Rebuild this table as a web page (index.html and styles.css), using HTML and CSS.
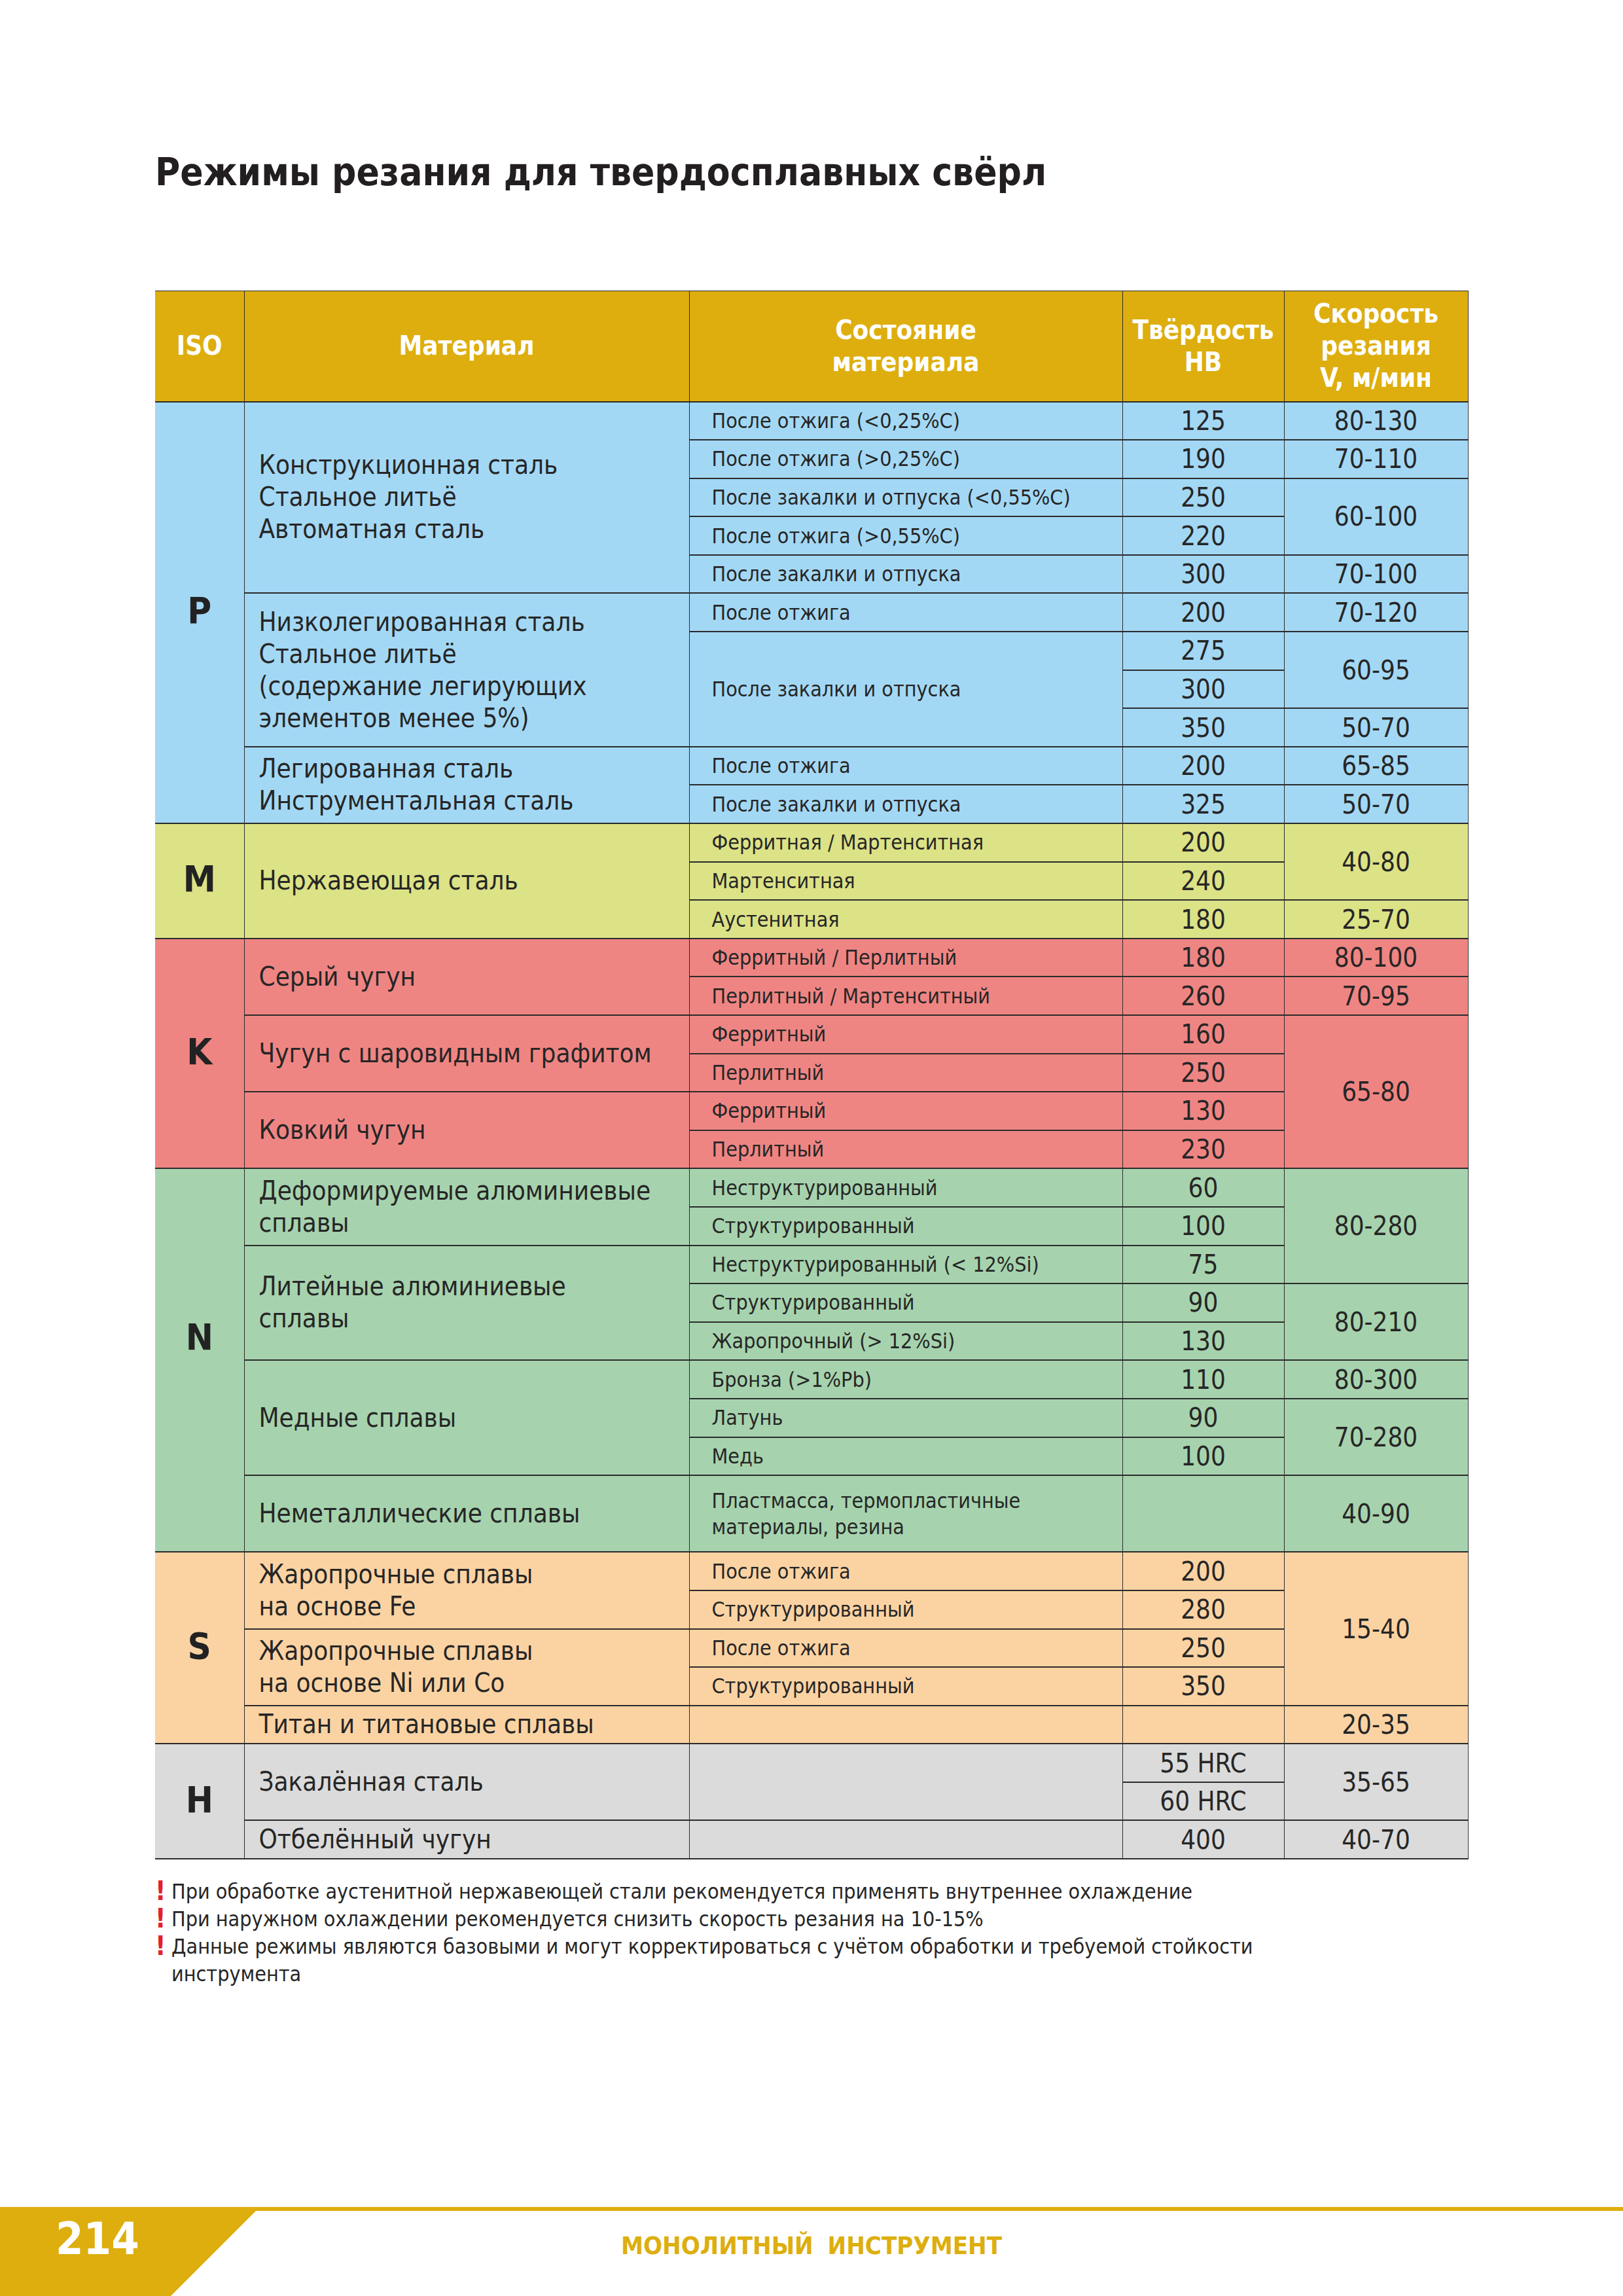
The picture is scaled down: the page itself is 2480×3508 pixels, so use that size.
FILE: index.html
```html
<!DOCTYPE html>
<html lang="ru">
<head>
<meta charset="utf-8">
<title>Режимы резания для твердосплавных свёрл</title>
<link rel="stylesheet" href="styles.css">
</head>
<body>
<div class="page">
  <main class="content">
    <h1 class="title">Режимы резания для твердосплавных свёрл</h1>
    <table class="modes">
      <colgroup>
        <col class="c-iso"><col class="c-mat"><col class="c-st"><col class="c-hb"><col class="c-v">
      </colgroup>
      <thead>
        <tr class="head">
          <th>ISO</th>
          <th>Материал</th>
          <th>Состояние<br>материала</th>
          <th>Твёрдость<br>HB</th>
          <th>Скорость<br>резания<br>V, м/мин</th>
        </tr>
      </thead>
      <tbody class="g-p">
        <tr>
          <td class="iso" rowspan="11">P</td>
          <td class="mat" rowspan="5">Конструкционная сталь<br>Стальное литьё<br>Автоматная сталь</td>
          <td class="st">После отжига (&lt;0,25%C)</td>
          <td class="num">125</td>
          <td class="num">80-130</td>
        </tr>
        <tr><td class="st">После отжига (&gt;0,25%C)</td><td class="num">190</td><td class="num">70-110</td></tr>
        <tr><td class="st">После закалки и отпуска (&lt;0,55%C)</td><td class="num">250</td><td class="num" rowspan="2">60-100</td></tr>
        <tr><td class="st">После отжига (&gt;0,55%C)</td><td class="num">220</td></tr>
        <tr><td class="st">После закалки и отпуска</td><td class="num">300</td><td class="num">70-100</td></tr>
        <tr>
          <td class="mat" rowspan="4">Низколегированная сталь<br>Стальное литьё<br>(содержание легирующих<br>элементов менее 5%)</td>
          <td class="st">После отжига</td><td class="num">200</td><td class="num">70-120</td>
        </tr>
        <tr><td class="st" rowspan="3">После закалки и отпуска</td><td class="num">275</td><td class="num" rowspan="2">60-95</td></tr>
        <tr><td class="num">300</td></tr>
        <tr><td class="num">350</td><td class="num">50-70</td></tr>
        <tr>
          <td class="mat" rowspan="2">Легированная сталь<br>Инструментальная сталь</td>
          <td class="st">После отжига</td><td class="num">200</td><td class="num">65-85</td>
        </tr>
        <tr><td class="st">После закалки и отпуска</td><td class="num">325</td><td class="num">50-70</td></tr>
      </tbody>
      <tbody class="g-m">
        <tr>
          <td class="iso" rowspan="3">M</td>
          <td class="mat" rowspan="3">Нержавеющая сталь</td>
          <td class="st">Ферритная / Мартенситная</td><td class="num">200</td><td class="num" rowspan="2">40-80</td>
        </tr>
        <tr><td class="st">Мартенситная</td><td class="num">240</td></tr>
        <tr><td class="st">Аустенитная</td><td class="num">180</td><td class="num">25-70</td></tr>
      </tbody>
      <tbody class="g-k">
        <tr>
          <td class="iso" rowspan="6">K</td>
          <td class="mat" rowspan="2">Серый чугун</td>
          <td class="st">Ферритный / Перлитный</td><td class="num">180</td><td class="num">80-100</td>
        </tr>
        <tr><td class="st">Перлитный / Мартенситный</td><td class="num">260</td><td class="num">70-95</td></tr>
        <tr>
          <td class="mat" rowspan="2">Чугун с шаровидным графитом</td>
          <td class="st">Ферритный</td><td class="num">160</td><td class="num" rowspan="4">65-80</td>
        </tr>
        <tr><td class="st">Перлитный</td><td class="num">250</td></tr>
        <tr>
          <td class="mat" rowspan="2">Ковкий чугун</td>
          <td class="st">Ферритный</td><td class="num">130</td>
        </tr>
        <tr><td class="st">Перлитный</td><td class="num">230</td></tr>
      </tbody>
      <tbody class="g-n">
        <tr>
          <td class="iso iso-high" rowspan="10">N</td>
          <td class="mat" rowspan="2">Деформируемые алюминиевые<br>сплавы</td>
          <td class="st">Неструктурированный</td><td class="num">60</td><td class="num" rowspan="3">80-280</td>
        </tr>
        <tr><td class="st">Структурированный</td><td class="num">100</td></tr>
        <tr>
          <td class="mat" rowspan="3">Литейные алюминиевые<br>сплавы</td>
          <td class="st">Неструктурированный (&lt; 12%Si)</td><td class="num">75</td>
        </tr>
        <tr><td class="st">Структурированный</td><td class="num">90</td><td class="num" rowspan="2">80-210</td></tr>
        <tr><td class="st">Жаропрочный (&gt; 12%Si)</td><td class="num">130</td></tr>
        <tr>
          <td class="mat" rowspan="3">Медные сплавы</td>
          <td class="st">Бронза (&gt;1%Pb)</td><td class="num">110</td><td class="num">80-300</td>
        </tr>
        <tr><td class="st">Латунь</td><td class="num">90</td><td class="num" rowspan="2">70-280</td></tr>
        <tr><td class="st">Медь</td><td class="num">100</td></tr>
        <tr>
          <td class="mat" rowspan="2">Неметаллические сплавы</td>
          <td class="st" rowspan="2">Пластмасса, термопластичные<br>материалы, резина</td>
          <td class="num" rowspan="2"></td>
          <td class="num" rowspan="2">40-90</td>
        </tr>
        <tr></tr>
      </tbody>
      <tbody class="g-s">
        <tr>
          <td class="iso" rowspan="5">S</td>
          <td class="mat" rowspan="2">Жаропрочные сплавы<br>на основе Fe</td>
          <td class="st">После отжига</td><td class="num">200</td><td class="num" rowspan="4">15-40</td>
        </tr>
        <tr><td class="st">Структурированный</td><td class="num">280</td></tr>
        <tr>
          <td class="mat" rowspan="2">Жаропрочные сплавы<br>на основе Ni или Co</td>
          <td class="st">После отжига</td><td class="num">250</td>
        </tr>
        <tr><td class="st">Структурированный</td><td class="num">350</td></tr>
        <tr><td class="mat">Титан и титановые сплавы</td><td class="st"></td><td class="num"></td><td class="num">20-35</td></tr>
      </tbody>
      <tbody class="g-h">
        <tr>
          <td class="iso" rowspan="3">H</td>
          <td class="mat" rowspan="2">Закалённая сталь</td>
          <td class="st" rowspan="2"></td>
          <td class="num">55 HRC</td><td class="num" rowspan="2">35-65</td>
        </tr>
        <tr><td class="num">60 HRC</td></tr>
        <tr><td class="mat">Отбелённый чугун</td><td class="st"></td><td class="num">400</td><td class="num">40-70</td></tr>
      </tbody>
    </table>

    <ul class="notes">
      <li><span class="mark">!</span>При обработке аустенитной нержавеющей стали рекомендуется применять внутреннее охлаждение</li>
      <li><span class="mark">!</span>При наружном охлаждении рекомендуется снизить скорость резания на 10-15%</li>
      <li><span class="mark">!</span>Данные режимы являются базовыми и могут корректироваться с учётом обработки и требуемой стойкости<br>инструмента</li>
    </ul>
  </main>

  <footer class="footer">
    <div class="page-num">214</div>
    <div class="section">МОНОЛИТНЫЙ ИНСТРУМЕНТ</div>
    <div class="spacer"></div>
  </footer>
</div>
</body>
</html>
```

FILE: styles.css
```css
html, body {
  margin: 0;
  padding: 0;
  background: #ffffff;
}

.page {
  width: 2480px;
  height: 3508px;
  display: flex;
  flex-direction: column;
  font-family: "DejaVu Sans Condensed", "DejaVu Sans", sans-serif;
  font-stretch: condensed;
  color: #262626;
  overflow: hidden;
}

.content {
  padding-left: 237px;
}

.title {
  margin: 0;
  padding-top: 228px;
  font-size: 58px;
  line-height: 70px;
  font-weight: bold;
  color: #231f20;
}

/* ---------- table ---------- */
.modes {
  margin-top: 146px;
  width: 2006px;
  border-collapse: collapse;
  table-layout: fixed;
}

.c-iso { width: 136px; }
.c-mat { width: 680px; }
.c-st  { width: 662px; }
.c-hb  { width: 247px; }
.c-v   { width: 281px; }

.modes th,
.modes td {
  padding: 0;
  border-bottom: 2px solid #2b2b2b;
  border-left: 1px solid #2b2b2b;
  vertical-align: middle;
}

.modes th:last-child,
.modes td:last-child {
  border-right: 1px solid #3a3a3a;
}

.modes .iso {
  border-left: 0;
}

.head {
  height: 169px;
}

.head th {
  background: #ddae0e;
  color: #ffffff;
  font-size: 40px;
  line-height: 49px;
  font-weight: bold;
  text-align: center;
  border-top: 1px solid #2b2b2b;
}

.head th:first-child {
  border-left: 0;
}

.modes tbody tr {
  height: 58.6px;
}

.iso {
  text-align: center;
  font-size: 56px;
  font-weight: bold;
  color: #222222;
  padding-bottom: 6px !important;
}

.iso-high {
  padding-bottom: 72px !important;
}

.mat {
  padding-left: 22px !important;
  font-size: 40px;
  line-height: 49px;
}

.st {
  padding-left: 34px !important;
  font-size: 32px;
  line-height: 40px;
}

.num {
  text-align: center;
  font-size: 40px;
  line-height: 48px;
}

.g-p td { background: #a3d8f5; }
.g-m td { background: #dce286; }
.g-k td { background: #ef8583; }
.g-n td { background: #a6d3ae; }
.g-s td { background: #fbd3a3; }
.g-h td { background: #dbdbdb; }

/* ---------- notes ---------- */
.notes {
  list-style: none;
  margin: 28px 0 0 0;
  padding: 0 0 0 25px;
  font-size: 32px;
  line-height: 42px;
  color: #262626;
}

.notes li {
  text-indent: -25px;
}

.mark {
  display: inline-block;
  width: 25px;
  text-indent: 0;
  font-size: 40px;
  font-weight: bold;
  color: #e3202a;
  line-height: 40px;
  vertical-align: top;
}

/* ---------- footer ---------- */
.footer {
  margin-top: auto;
  height: 130px;
  border-top: 6px solid #ddae0e;
  display: grid;
  grid-template-columns: 391px 1fr 391px;
}

.page-num {
  background: #ddae0e;
  clip-path: polygon(0 0, 100% 0, 66.75% 100%, 0 100%);
  color: #ffffff;
  font-size: 68px;
  line-height: 80px;
  font-weight: bold;
  padding: 3px 0 0 85px;
}

.section {
  text-align: center;
  color: #ddae0e;
  font-size: 38px;
  line-height: 50px;
  font-weight: bold;
  word-spacing: 10px;
  padding-top: 28px;
}
```
